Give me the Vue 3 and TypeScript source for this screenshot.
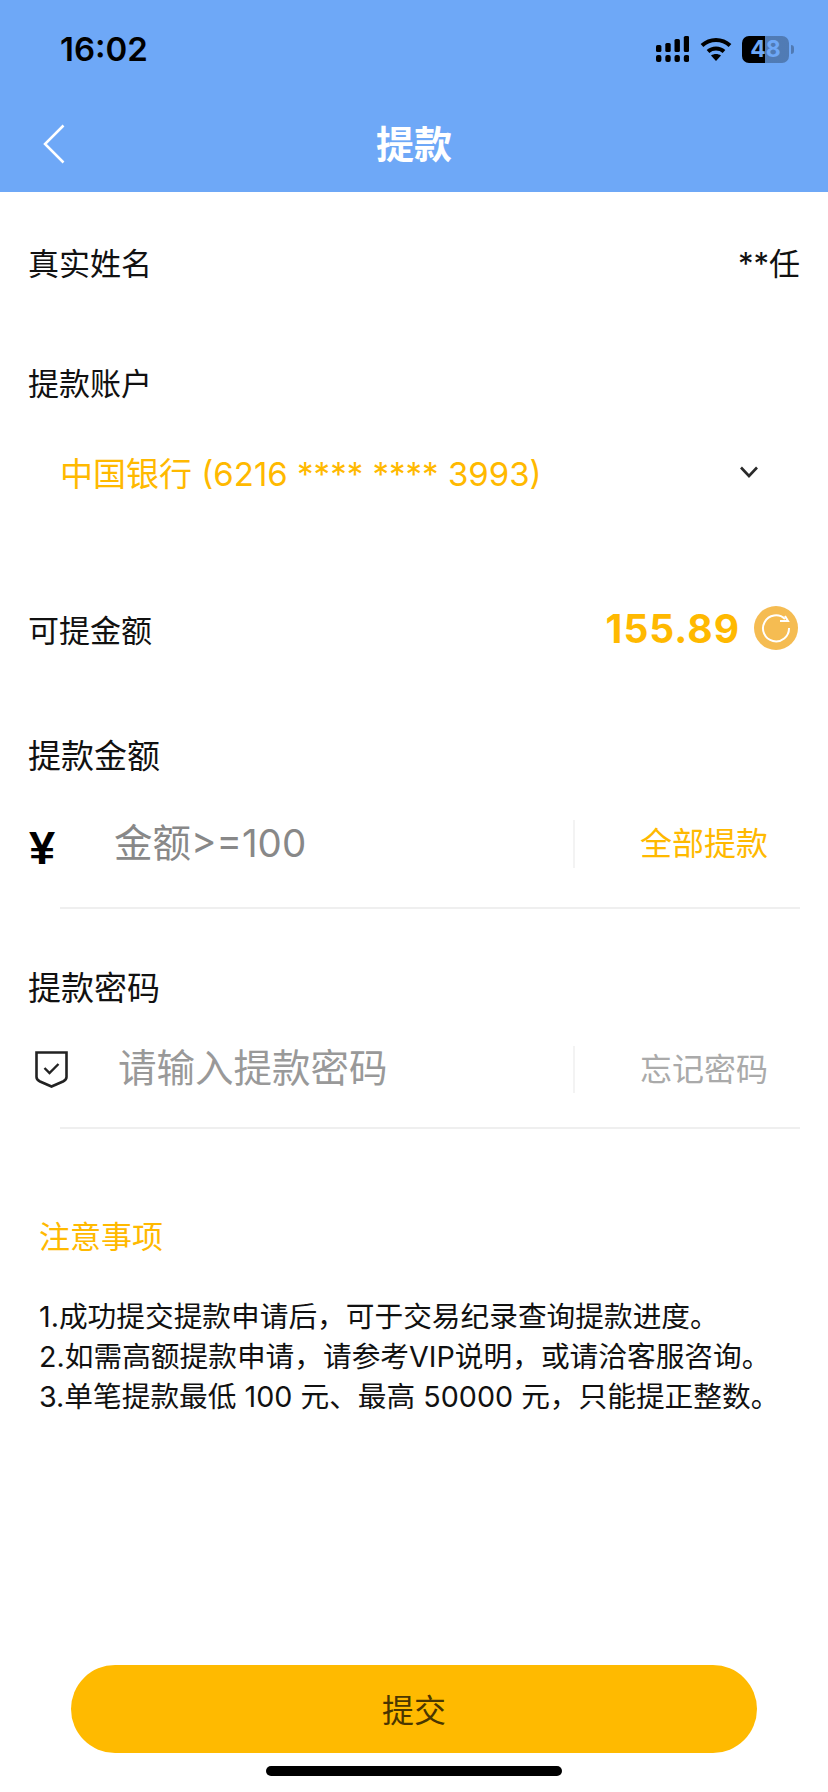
<script setup lang="ts">
const comma = '\uFF0C'
const notes = [
  `1.成功提交提款申请后${comma}可于交易纪录查询提款进度。`,
  `2.如需高额提款申请${comma}请参考VIP说明${comma}或请洽客服咨询。`,
  `3.单笔提款最低 100 元、最高 50000 元${comma}只能提正整数。`,
]

// top row of the signal icon: x, y
const signalBars = [
  { x: 0, y: 9 },
  { x: 9.3, y: 7 },
  { x: 18.5, y: 3 },
  { x: 27.8, y: 0 },
]
</script>

<template>
  <div class="page">
    <header class="head">
      <div class="status">
        <span class="time">16:02</span>
        <div class="status-icons">
          <svg width="33" height="26" viewBox="0 0 33 26">
            <g v-for="b in signalBars" :key="b.x">
              <rect :x="b.x" :y="b.y" width="5.4" :height="16 - b.y" rx="1.6" />
              <rect :x="b.x" y="19" width="5.4" height="7" rx="2" />
            </g>
          </svg>
          <svg width="32" height="24" viewBox="0 0 32 24">
            <path d="M2 8.500C10 1 22 1 30 8.500M8 14.500C12.500 10.500 19.500 10.500 24 14.500" fill="none" stroke="#000" stroke-width="4" />
            <path d="M11 18.500C14 16.500 18 16.500 21 18.500L16 24Z" />
          </svg>
          <div class="battery-wrap">
            <div class="battery">48</div>
            <i class="battery-tip"></i>
          </div>
        </div>
      </div>
      <nav class="nav">
        <svg class="back" width="22" height="40" viewBox="0 0 22 40">
          <path d="M20.500 1.500L2 20L20.500 38.500" fill="none" stroke="#fff" stroke-width="2.500" />
        </svg>
        <h1 class="title">提款</h1>
      </nav>
    </header>

    <div class="row row-name">
      <span>真实姓名</span>
      <span>**任</span>
    </div>

    <div class="label label-account">提款账户</div>
    <div class="select">
      <span>中国银行 (6216 **** **** 3993)</span>
      <svg width="20" height="14" viewBox="0 0 20 14">
        <path d="M2 2.500L10 11L18 2.500" fill="none" stroke="#2a2a2a" stroke-width="2.600" />
      </svg>
    </div>

    <div class="row row-balance">
      <span>可提金额</span>
      <div class="balance">
        <span class="amount">155.89</span>
        <svg width="44" height="44" viewBox="0 0 44 44">
          <circle cx="22" cy="22" r="22" fill="#f5bc52" />
          <path d="M35 22A13 13 0 1 1 31 13" fill="none" stroke="#fff" stroke-width="2" />
          <path d="M26 15H34L31 10" fill="none" stroke="#fff" stroke-width="2" />
        </svg>
      </div>
    </div>

    <div class="label label-amount">提款金额</div>
    <div class="field field-amount">
      <span class="yen">¥</span>
      <span class="hint hint-amount">金额&gt;=100</span>
      <span class="action action-on">全部提款</span>
    </div>
    <div class="line line-amount"></div>

    <div class="label label-pwd">提款密码</div>
    <div class="field field-pwd">
      <svg class="shield" width="33" height="37" viewBox="0 0 33 37">
        <path d="M1.500 1.500H31.500V26C31.500 28 30 29.500 28 30.500L16.500 35.500L5 30.500C3 29.500 1.500 28 1.500 26Z" fill="none" stroke="#222" stroke-width="2.600" />
        <path d="M9.500 17L14.500 22L23.500 13" fill="none" stroke="#222" stroke-width="2.400" />
      </svg>
      <span class="hint hint-pwd">请输入提款密码</span>
      <span class="action">忘记密码</span>
    </div>
    <div class="line line-pwd"></div>

    <div class="notice-title">注意事项</div>
    <div class="notes">
      <p v-for="n in notes" :key="n">{{ n }}</p>
    </div>

    <button class="submit">提交</button>
    <div class="home-bar"></div>
  </div>
</template>

<style scoped>
.page {
  width: 828px;
  height: 1792px;
  display: flex;
  flex-direction: column;
  background: #fff;
  color: #111;
  font-family: Inter, "Noto Sans CJK SC", sans-serif;
  font-size: 31px;
  overflow: hidden;
}

.head {
  height: 192px;
  background: #6ea8f7;
  flex: none;
}
.status {
  height: 98px;
  display: flex;
  align-items: center;
  justify-content: space-between;
  padding: 0 34px 0 60px;
}
.time {
  font-size: 33px;
  font-weight: 600;
  color: #000;
}
.status-icons {
  display: flex;
  align-items: center;
  gap: 11px;
}
.battery-wrap {
  display: flex;
  align-items: center;
  gap: 2px;
  margin-left: -1px;
}
.battery {
  width: 47px;
  height: 27px;
  border-radius: 7px;
  background: linear-gradient(90deg, #000 48%, rgba(0, 0, 0, 0.27) 48%);
  color: #6ea8f7;
  font-size: 23px;
  font-weight: 700;
  line-height: 27px;
  text-align: center;
}
.battery-tip {
  width: 3px;
  height: 9px;
  border-radius: 0 3px 3px 0;
  background: rgba(0, 0, 0, 0.27);
}

.nav {
  height: 92px;
  display: grid;
  grid-template-columns: 1fr auto 1fr;
  align-items: center;
}
.back {
  margin-left: 43px;
}
.title {
  margin: 0;
  padding-bottom: 6px;
  color: #fff;
  font-size: 38px;
  font-weight: 700;
}

.row {
  display: flex;
  align-items: center;
  justify-content: space-between;
  padding: 0 28px;
}
.row-name {
  height: 70px;
  margin-top: 34px;
}
.row-balance {
  height: 60px;
  margin-top: 96px;
  padding-right: 30px;
}

.label {
  height: 50px;
  line-height: 50px;
  padding-left: 28px;
}
.label-account {
  margin-top: 63px;
}
.label-amount {
  margin-top: 73px;
  font-size: 33px;
}
.label-pwd {
  margin-top: 54px;
  font-size: 33px;
}

.select {
  height: 60px;
  margin-top: 33px;
  padding: 0 69px 0 60px;
  display: flex;
  align-items: center;
  justify-content: space-between;
  color: #ffb900;
  font-size: 33px;
}

.balance {
  display: flex;
  align-items: center;
  gap: 14px;
}
.amount {
  color: #ffb900;
  font-size: 39px;
  font-weight: 700;
  letter-spacing: 1px;
}

.field {
  width: 739px;
  margin-left: 29px;
  display: flex;
  align-items: center;
}
.field-amount {
  height: 48px;
  margin-top: 39px;
}
.field-pwd {
  height: 47px;
  margin-top: 33px;
}
.yen {
  width: 85px;
  padding-top: 6px;
  font-family: "Liberation Sans", sans-serif;
  font-size: 47px;
  font-weight: 700;
  color: #000;
}
.shield {
  margin-left: 6px;
  width: 33px;
  margin-right: 50px;
  flex: none;
}
.hint {
  flex: 1;
  font-size: 38.500px;
  color: #888;
}
.hint-amount {
  padding-bottom: 8px;
}
.hint-pwd {
  padding-bottom: 10px;
  color: #999;
}
.action {
  height: 100%;
  padding-left: 65px;
  border-left: 2px solid #f3f3f3;
  font-size: 32px;
  line-height: 47px;
  color: #aaa;
}
.action-on {
  color: #ffb900;
}

.line {
  height: 2px;
  margin: 0 28px 0 60px;
  background: #efefef;
}
.line-amount {
  margin-top: 39px;
}
.line-pwd {
  margin-top: 34px;
}

.notice-title {
  height: 40px;
  line-height: 40px;
  margin-top: 88px;
  padding-left: 39px;
  color: #ffb900;
}
.notes {
  margin-top: 40px;
  padding-left: 39px;
  font-size: 28.700px;
  line-height: 40px;
}
.notes p {
  margin: 0;
  white-space: nowrap;
}

.submit {
  width: 686px;
  height: 88px;
  margin: auto 0 0 71px;
  padding: 0 0 3px;
  border: none;
  border-radius: 44px;
  background: #ffba00;
  color: #4a3600;
  font-family: inherit;
  font-size: 32px;
  flex: none;
}
.home-bar {
  width: 296px;
  height: 10px;
  margin: 13px 0 16px 266px;
  border-radius: 5px;
  background: #000;
  flex: none;
}
</style>
